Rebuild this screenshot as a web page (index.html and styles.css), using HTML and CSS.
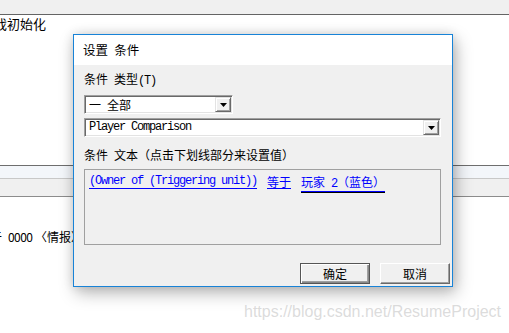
FILE: index.html
```html
<!DOCTYPE html>
<html lang="zh-CN">
<head>
    <meta charset="UTF-8">
    <title>设置 条件</title>
    <link rel="stylesheet" href="styles.css">
</head>
<body>
    <div class="desk">
        <div class="topbar"></div>
        <div class="line-text">戏初始化</div>
        <div class="panel">
            <div class="band-light"></div>
            <div class="band-gray"></div>
        </div>
        <div class="info-text"><span class="cut">于</span>&ensp;<span class="digits">0000</span> 〈情报〉</div>
    </div>

    <div class="dialog">
        <div class="title">设置&ensp;条件</div>
        <div class="body">
            <div class="label">条件&ensp;类型<span class="mono">(T)</span></div>
            <div class="select short">
                <span class="value">一&ensp;全部</span>
                <span class="drop">
                    <svg width="7" height="4" viewBox="0 0 7 4"><path d="M0 0h7L3.5 4z" fill="#000"/></svg>
                </span>
            </div>
            <div class="select wide">
                <span class="value mono">Player Comparison</span>
                <span class="drop">
                    <svg width="7" height="4" viewBox="0 0 7 4"><path d="M0 0h7L3.5 4z" fill="#000"/></svg>
                </span>
            </div>
            <div class="label label-text">条件&ensp;文本（点击下划线部分来设置值）</div>
            <div class="textbox">
                <a class="link mono">(Owner of (Triggering unit))</a>
                <a class="link">等于</a>
                <a class="link focus">玩家&ensp;<span class="mono">2</span>（蓝色）</a>
            </div>
            <div class="buttons">
                <button class="btn default">确定</button>
                <button class="btn">取消</button>
            </div>
        </div>
    </div>

    <div class="watermark">https://blog.csdn.net/ResumeProject</div>
</body>
</html>
```

FILE: styles.css
```css
body {
    margin: 0;
    width: 509px;
    height: 333px;
    overflow: hidden;
    background: #fff;
    font-family: "Noto Sans CJK SC", "Liberation Sans", sans-serif;
    font-size: 12px;
    color: #000;
    position: relative;
}
.mono {
    font-family: "Liberation Mono", "Noto Sans CJK SC", monospace;
    font-size: 12px;
    letter-spacing: -1.2px;
}
.desk {
    display: flex;
    flex-direction: column;
}
.topbar {
    height: 14px;
    background: #f0f0f0;
    border-bottom: 1px solid #646464;
}
.line-text {
    margin-top: 1px;
    margin-left: -6px;
    font-size: 13px;
    line-height: 16px;
}
.panel {
    margin-top: 133px;
    border-top: 1px solid #6e6e6e;
}
.band-light {
    height: 12px;
    background: #f3f6fa;
    border-bottom: 1px solid #c8c8c8;
}
.band-gray {
    height: 17px;
    background: #f0f0f0;
    border-bottom: 1px solid #8c8c8c;
}
.info-text {
    margin-top: 33px;
    margin-left: -4px;
    line-height: 14px;
    white-space: nowrap;
}
.info-text .cut {
    display: inline-block;
    width: 6px;
    overflow: hidden;
    vertical-align: top;
    direction: rtl;
}
.digits {
    letter-spacing: -0.6px;
}

.dialog {
    position: absolute;
    left: 73px;
    top: 34px;
    width: 380px;
    height: 253px;
    box-sizing: border-box;
    border: 1px solid #1883d7;
    background: #f0f0f0;
    box-shadow: 3px 6px 16px rgba(0,0,0,0.28), 0 0 10px rgba(0,0,0,0.12);
    display: flex;
    flex-direction: column;
}
.title {
    height: 30px;
    line-height: 30px;
    background: #fff;
    padding-left: 9px;
    font-size: 12.5px;
}
.body {
    padding: 0 10px;
    display: flex;
    flex-direction: column;
}
.label {
    margin-top: 7px;
    height: 14px;
    line-height: 14px;
}
.label-text {
    margin-top: 11px;
}
.select {
    display: flex;
    align-items: stretch;
    height: 19px;
    box-sizing: border-box;
    background: #fff;
    border: 1px solid;
    border-color: #a0a0a0 #fff #fff #a0a0a0;
    box-shadow: inset 1px 1px #696969, inset -1px -1px #e3e3e3;
    padding: 1px;
}
.short {
    margin-top: 9px;
    width: 149px;
}
.wide {
    margin-top: 4px;
    width: 357px;
}
.value {
    flex: 1;
    padding-left: 3px;
    line-height: 15px;
    white-space: nowrap;
}
.drop {
    width: 16px;
    box-sizing: border-box;
    background: #f0f0f0;
    border: 1px solid;
    border-color: #e3e3e3 #696969 #696969 #e3e3e3;
    box-shadow: inset 1px 1px #fff, inset -1px -1px #a0a0a0;
    display: flex;
    align-items: center;
    justify-content: center;
}
.textbox {
    margin-top: 7px;
    width: 357px;
    height: 76px;
    box-sizing: border-box;
    border: 1px solid #a0a0a0;
    padding: 5px 4px;
    display: flex;
    align-items: flex-start;
    gap: 10px;
}
.link {
    color: #0000ff;
    text-decoration: none;
    display: inline-block;
    line-height: 13px;
    border-bottom: 1px solid #0000ff;
    white-space: nowrap;
}
.focus {
    box-shadow: 0 1px 0 #000;
}
.buttons {
    margin-top: 18px;
    margin-right: -8px;
    display: flex;
    justify-content: flex-end;
    gap: 10px;
}
.btn {
    width: 70px;
    height: 21px;
    padding: 0;
    margin: 0;
    font-family: "Noto Sans CJK SC", sans-serif;
    font-size: 12px;
    color: #000;
    background: #f0f0f0;
    border: 1px solid;
    border-color: #fff #696969 #696969 #fff;
    box-shadow: inset -1px -1px #a0a0a0;
}
.default {
    border-color: #555;
    box-shadow: inset 1px 1px #fff, inset -1px -1px #888, inset -2px -2px #a0a0a0;
}

.watermark {
    position: absolute;
    left: 244px;
    top: 303px;
    font-family: "Liberation Sans", Arial, sans-serif;
    font-size: 16px;
    color: rgba(190,190,190,0.55);
    white-space: nowrap;
}
```
